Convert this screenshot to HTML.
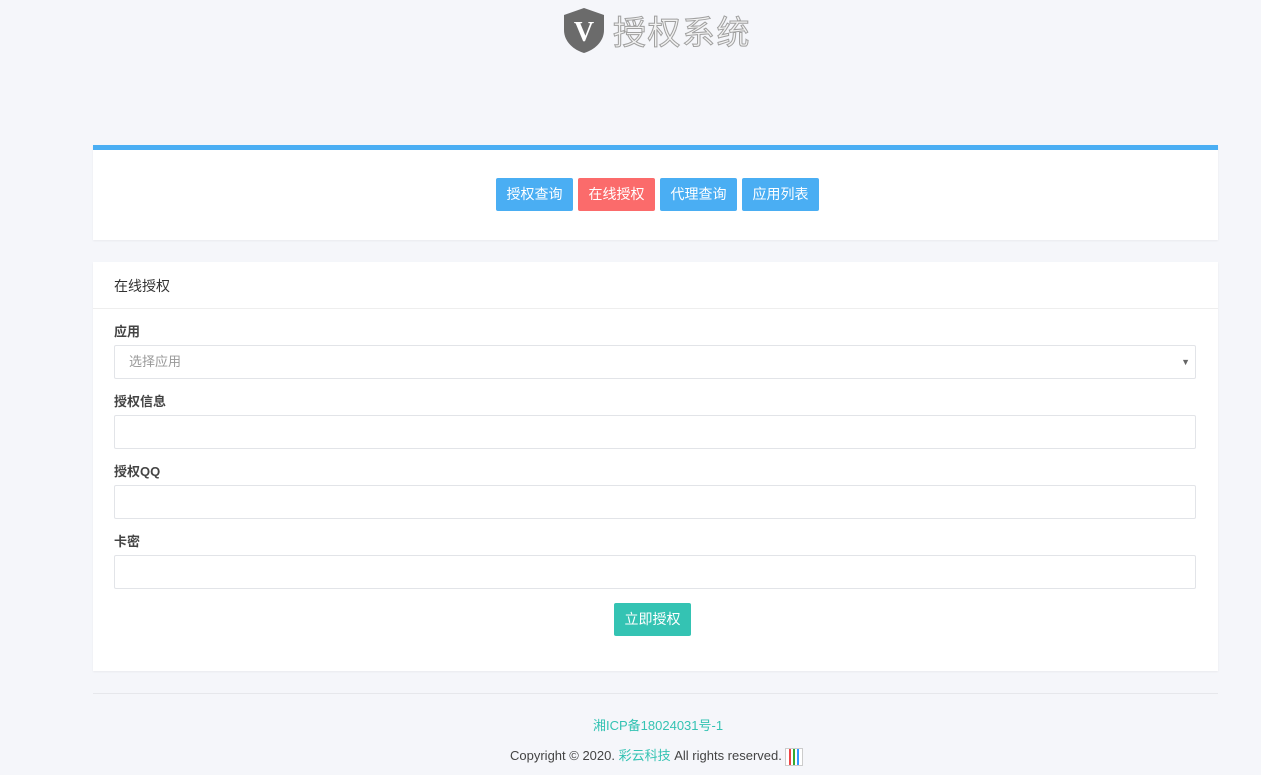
<!DOCTYPE html>
<html><head><meta charset="utf-8"><style>
body{margin:0;background:#f5f6fa;font-family:"Liberation Sans","Noto Sans CJK SC",sans-serif;font-size:13px;color:#333;width:1261px;height:775px;overflow:hidden;position:relative}
.logo{position:absolute;left:561px;top:6px;display:flex;align-items:center}
.logo span{font-size:33px;color:#f2f2f2;-webkit-text-stroke:1px #a0a0a0;margin-left:6px;letter-spacing:1.5px}
.card1{position:absolute;left:93px;top:145px;width:1125px;height:95px;background:#fff;border-top:5px solid #4aaef3;box-sizing:border-box;box-shadow:0 1px 2px rgba(0,0,0,.05)}
.btns{position:absolute;top:28px;left:403px;display:flex;gap:5px}
.btn{height:33px;line-height:33px;padding:0 10px;color:#fff;font-size:14px;border-radius:2px;background:#4aaef3;width:57px;text-align:center}
.card2{position:absolute;left:93px;top:262px;width:1125px;height:409px;background:#fff;box-shadow:0 1px 2px rgba(0,0,0,.05)}
.hd{height:46px;line-height:48px;padding-left:21px;font-size:14px;border-bottom:1px solid #eee}
label{position:absolute;left:21px;font-weight:bold;font-size:13px;color:#444}
.in{position:absolute;left:21px;width:1082px;height:34px;border:1px solid #e2e4e8;box-sizing:border-box;border-radius:2px;color:#999;line-height:32px;padding-left:14px}
.sub{position:absolute;left:521px;top:341px;width:77px;height:33px;line-height:33px;text-align:center;background:#34c3b3;color:#fff;font-size:14px;border-radius:2px}
.hr{position:absolute;left:93px;top:693px;width:1125px;border-top:1px solid #e6e7eb}
.f1{position:absolute;top:715px;left:593px;color:#34c3b3;font-size:13px}
.f2{position:absolute;top:745px;left:510px;font-size:13px;color:#444}
</style></head><body>
<div class="logo"><svg width="46" height="48" viewBox="0 0 46 48"><path d="M23 2 L43 9 L43 24 C43 36 33 44 23 47 C13 44 3 36 3 24 L3 9 Z" fill="#6b6b6b"/><text x="23" y="35" text-anchor="middle" font-family="Liberation Serif" font-weight="bold" font-size="28" fill="#fff">V</text></svg><span>授权系统</span></div>
<div class="card1"><div class="btns"><div class="btn">授权查询</div><div class="btn" style="background:#fb6b6b">在线授权</div><div class="btn">代理查询</div><div class="btn">应用列表</div></div></div>
<div class="card2"><div class="hd">在线授权</div>
<label style="top:59px">应用</label><div class="in" style="top:83px">选择应用<span style="position:absolute;right:5px;font-size:9px;color:#666">▼</span></div>
<label style="top:129px">授权信息</label><div class="in" style="top:153px"></div>
<label style="top:199px">授权QQ</label><div class="in" style="top:223px"></div>
<label style="top:269px">卡密</label><div class="in" style="top:293px"></div>
<div class="sub">立即授权</div></div>
<div class="hr"></div>
<div class="f1">湘ICP备18024031号-1</div>
<div class="f2">Copyright © 2020. <span style="color:#34c3b3">彩云科技</span> All rights reserved. <span style="display:inline-block;width:16px;height:16px;border:1px solid #ccc;vertical-align:middle;background:linear-gradient(to right,#fff 3px,#e44 3px,#e44 5px,#fff 5px,#fff 7px,#3a3 7px,#3a3 9px,#fff 9px,#fff 11px,#39f 11px,#39f 13px,#fff 13px)"></span></div>
</body></html>
